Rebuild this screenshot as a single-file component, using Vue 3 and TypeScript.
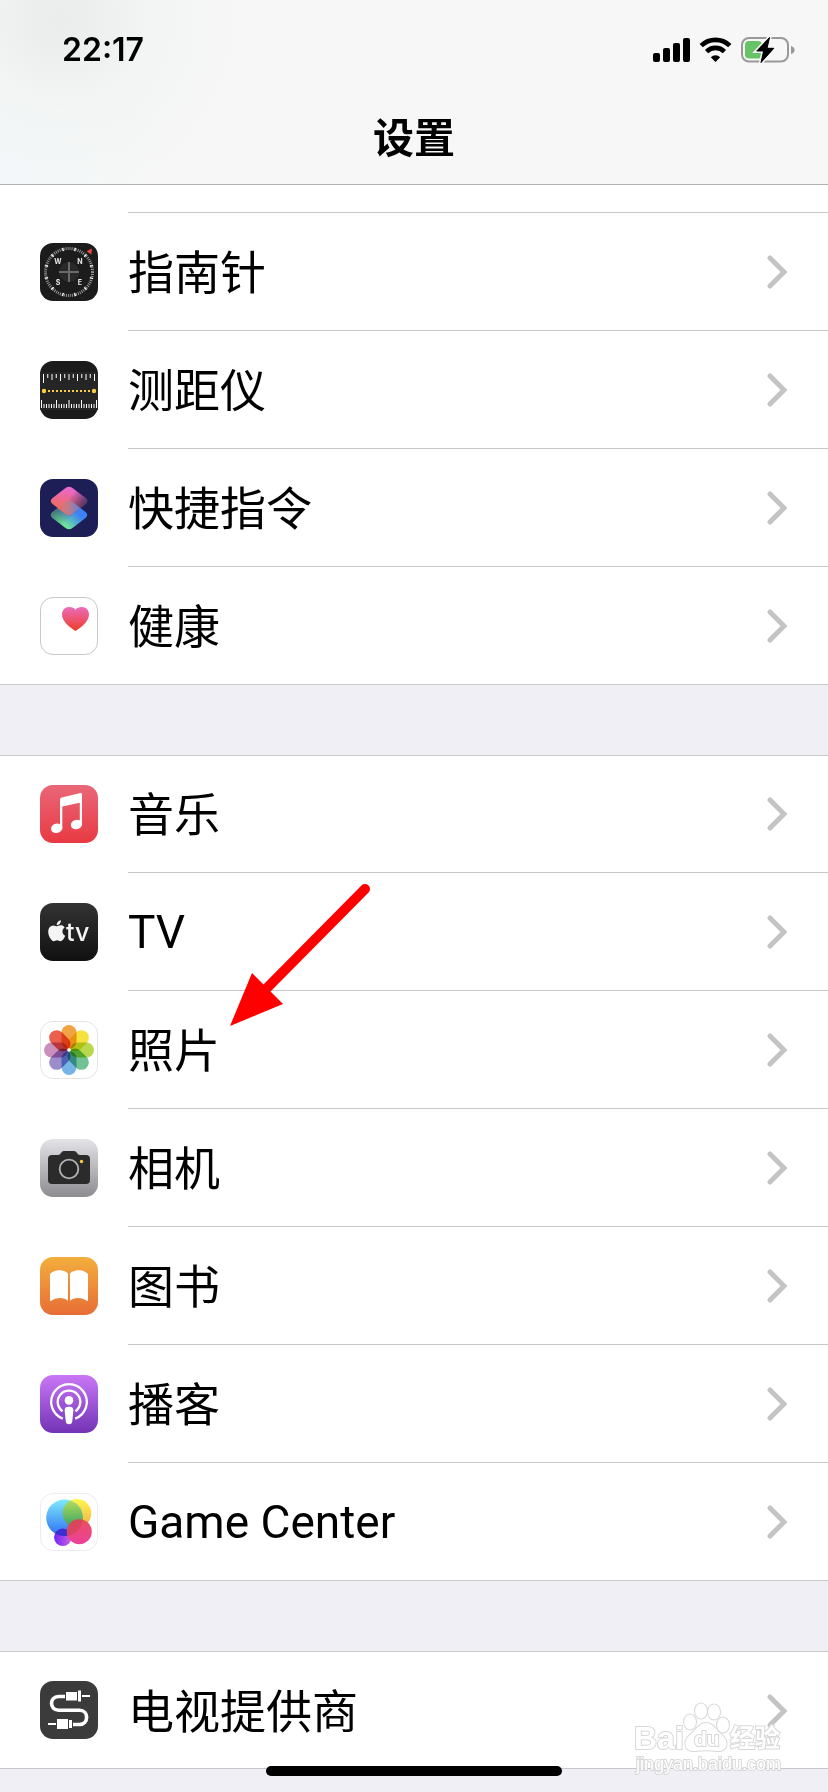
<script setup lang="ts">
type IconName =
  | 'compass' | 'measure' | 'shortcuts' | 'health' | 'music' | 'tv' | 'photos'
  | 'camera' | 'books' | 'podcasts' | 'gamecenter' | 'provider'

interface Entry {
  icon: IconName
  label: string
  pointed?: boolean
  latin?: boolean
}

const groups: { id: string; partial: boolean; entries: Entry[] }[] = [
  {
    id: 'tools',
    partial: true,
    entries: [
      { icon: 'compass', label: '指南针' },
      { icon: 'measure', label: '测距仪' },
      { icon: 'shortcuts', label: '快捷指令' },
      { icon: 'health', label: '健康' },
    ],
  },
  {
    id: 'media',
    partial: false,
    entries: [
      { icon: 'music', label: '音乐' },
      { icon: 'tv', label: 'TV', latin: true },
      { icon: 'photos', label: '照片', pointed: true },
      { icon: 'camera', label: '相机' },
      { icon: 'books', label: '图书' },
      { icon: 'podcasts', label: '播客' },
      { icon: 'gamecenter', label: 'Game Center', latin: true },
    ],
  },
  {
    id: 'provider',
    partial: false,
    entries: [{ icon: 'provider', label: '电视提供商' }],
  },
]

const petals = ['#f2a344', '#f6e23c', '#b9d84e', '#72c294', '#77b5e6', '#9c8ccb', '#cb8fbd', '#e9604f']
const majorTicks = Array.from({ length: 12 }, (_, i) => 15 + i * 30)
const upperTicks = Array.from({ length: 13 }, (_, i) => ({
  x: 3 + i * 4.25,
  h: i === 0 ? 9 : i % 4 === 0 ? 7 : i % 2 === 0 ? 6 : 4,
}))
const lowerTicks = Array.from({ length: 23 }, (_, i) => ({
  x: 1 + i * 2.5,
  h: [0, 6, 11, 16, 22].includes(i) ? 8 : 4,
}))
</script>

<template>
  <div class="screen">
    <header class="top">
      <div class="status">
        <time class="clock">22:17</time>
        <svg class="signals" viewBox="0 0 144 28" aria-hidden="true">
          <rect x="1" y="17" width="7" height="9" rx="2" />
          <rect x="11" y="12" width="7" height="14" rx="2" />
          <rect x="21" y="7" width="7" height="19" rx="2" />
          <rect x="31" y="2" width="7" height="24" rx="2" />
          <g fill="none" stroke="#000" stroke-width="4.6">
            <path d="M49.2 9.7 A20.5 20.5 0 0 1 77.8 9.7" />
            <path d="M54.6 15.6 A12.6 12.6 0 0 1 72.4 15.6" />
          </g>
          <path d="M63.5 26 L58.8 21.2 A6.8 6.8 0 0 1 68.2 21.2 Z" />
          <rect x="90" y="2" width="46" height="23.6" rx="7" fill="none" stroke="#999" stroke-width="2" />
          <path d="M139 10 Q142.6 11 142.6 14 T139 18 Z" fill="#999" />
          <rect x="93" y="5" width="17" height="17.6" rx="4" fill="#67c466" />
          <path d="M117.5 1.5 L104.8 15 H111.6 L109 26.5 L121.8 12.3 H115 Z" fill="#000" stroke="#f7f7f7" stroke-width="4" paint-order="stroke" />
          <path d="M117.5 1.5 L104.8 15 H111.6 L109 26.5 L121.8 12.3 H115 Z" stroke="#000" stroke-width="1" stroke-linejoin="round" />
        </svg>
      </div>
      <h1 class="title">设置</h1>
    </header>

    <main class="content">
      <section v-for="group in groups" :key="group.id" class="group" :class="{ partial: group.partial }">
        <div v-if="group.partial" class="remainder"></div>
        <ul class="rows">
          <li v-for="entry in group.entries" :key="entry.label" class="item">
            <button type="button" class="row">
              <svg class="icon" viewBox="0 0 58 58" aria-hidden="true">
                <template v-if="entry.icon === 'compass'">
                  <rect width="58" height="58" rx="13" fill="#1c1c1c" />
                  <circle cx="29" cy="29" r="23.5" fill="none" stroke="#a2a2a2" stroke-width="3" stroke-dasharray="0.9 1.15" />
                  <path v-for="a in majorTicks" :key="a" d="M29 4 V7.4" stroke="#fff" stroke-width="1.2" :transform="`rotate(${a} 29 29)`" />
                  <circle cx="29" cy="29" r="10" fill="#292929" />
                  <path d="M29 19 V39 M19 29 H39" stroke="#6a6a6a" stroke-width="2" />
                  <g class="points" fill="#e8e8e8">
                    <text x="18" y="21">W</text>
                    <text x="40" y="21">N</text>
                    <text x="18" y="42">S</text>
                    <text x="40" y="42">E</text>
                  </g>
                  <path d="M46.5 8.3 L52 5.6 L51.3 11.5 Z" fill="#f0483c" />
                </template>

                <template v-else-if="entry.icon === 'measure'">
                  <rect width="58" height="58" rx="13" fill="#1b1b1b" />
                  <rect y="11" width="58" height="38" fill="#252525" />
                  <rect v-for="t in upperTicks" :key="'u' + t.x" :x="t.x" y="13" width="1" :height="t.h" fill="#fff" />
                  <rect v-for="t in lowerTicks" :key="'l' + t.x" :x="t.x" :y="47 - t.h" width="1" :height="t.h" fill="#fff" />
                  <path d="M8 30 H50" stroke="#f7ce46" stroke-width="2" stroke-dasharray="2 2" />
                  <circle cx="4" cy="30" r="2.2" fill="#f7ce46" />
                  <circle cx="54" cy="30" r="2.2" fill="#f7ce46" />
                </template>

                <template v-else-if="entry.icon === 'shortcuts'">
                  <defs>
                    <linearGradient id="sc-blue" x1="0.35" y1="0.8" x2="0.8" y2="0.45">
                      <stop offset="0" stop-color="#6fe39a" />
                      <stop offset="0.9" stop-color="#3c82f6" />
                    </linearGradient>
                    <linearGradient id="sc-dark" x1="0" y1="0.3" x2="0.5" y2="0.7">
                      <stop offset="0" stop-color="#2b2f60" stop-opacity="0.7" />
                      <stop offset="1" stop-color="#2b2f60" stop-opacity="0" />
                    </linearGradient>
                    <linearGradient id="sc-pink" x1="0.5" y1="0" x2="0.3" y2="0.75">
                      <stop offset="0" stop-color="#e868d6" />
                      <stop offset="1" stop-color="#ef6b5e" />
                    </linearGradient>
                    <linearGradient id="sc-fade" x1="0.55" y1="0.3" x2="1" y2="0.55">
                      <stop offset="0" stop-color="#3a2a62" stop-opacity="0" />
                      <stop offset="1" stop-color="#3a2a62" stop-opacity="0.9" />
                    </linearGradient>
                    <linearGradient id="sc-mix" x1="0" y1="0.5" x2="1" y2="0.5">
                      <stop offset="0" stop-color="#ec6c62" />
                      <stop offset="0.5" stop-color="#bd7c8c" />
                      <stop offset="1" stop-color="#5b82dc" />
                    </linearGradient>
                  </defs>
                  <rect width="58" height="58" rx="13" fill="#1c1e55" />
                  <g transform="translate(0 14)">
                    <path d="M25.5 9 Q29 6.500 32.500 9 L45.500 19 Q49 22 45.500 25 L32.500 35 Q29 37.500 25.500 35 L12.500 25 Q9 22 12.500 19 Z" fill="url(#sc-blue)" />
                    <path d="M25.5 9 Q29 6.500 32.500 9 L45.500 19 Q49 22 45.500 25 L32.500 35 Q29 37.500 25.500 35 L12.500 25 Q9 22 12.500 19 Z" fill="url(#sc-dark)" />
                  </g>
                  <path d="M25.5 9 Q29 6.500 32.500 9 L45.500 19 Q49 22 45.500 25 L32.500 35 Q29 37.500 25.500 35 L12.500 25 Q9 22 12.500 19 Z" fill="url(#sc-pink)" />
                  <path d="M25.5 9 Q29 6.500 32.500 9 L45.500 19 Q49 22 45.500 25 L32.500 35 Q29 37.500 25.500 35 L12.500 25 Q9 22 12.500 19 Z" fill="url(#sc-fade)" />
                  <path d="M25.5 23 Q29 20.500 32.500 23 L40.300 29 L32.500 35 Q29 37.500 25.500 35 L17.700 29 Z" fill="url(#sc-mix)" />
                </template>

                <template v-else-if="entry.icon === 'health'">
                  <defs>
                    <linearGradient id="heart" x1="0" y1="0" x2="0" y2="1">
                      <stop offset="0" stop-color="#e96bbd" />
                      <stop offset="1" stop-color="#f13c26" />
                    </linearGradient>
                  </defs>
                  <rect x="0.5" y="0.5" width="57" height="57" rx="12.5" fill="#fff" stroke="#c8c8c8" />
                  <path d="M35.5 34 C31 31 22 25 22 17.5 C22 13 25 10 29 10 C32 10 34.5 11 35.5 12.8 C36.5 11 39 10 42 10 C46 10 49 13 49 17.5 C49 25 40 31 35.5 34 Z" fill="url(#heart)" />
                </template>

                <template v-else-if="entry.icon === 'music'">
                  <defs>
                    <linearGradient id="music" x1="0" y1="0" x2="0" y2="1">
                      <stop offset="0" stop-color="#ea6778" />
                      <stop offset="1" stop-color="#e83a43" />
                    </linearGradient>
                  </defs>
                  <rect width="58" height="58" rx="13" fill="url(#music)" />
                  <g fill="#fff">
                    <path d="M20 14.5 Q20 12.8 21.7 12.4 L40.5 8.1 Q42 7.8 42 9.3 V39.5 H39.8 V17.8 L22.3 21.6 V43.5 H20 Z" />
                    <ellipse cx="16.7" cy="43.3" rx="5.7" ry="4.7" transform="rotate(-14 16.7 43.3)" />
                    <ellipse cx="36.5" cy="39.5" rx="5.7" ry="4.7" transform="rotate(-14 36.5 39.5)" />
                  </g>
                </template>

                <template v-else-if="entry.icon === 'tv'">
                  <defs>
                    <linearGradient id="tv" x1="0" y1="0" x2="0" y2="1">
                      <stop offset="0" stop-color="#333" />
                      <stop offset="1" stop-color="#111" />
                    </linearGradient>
                  </defs>
                  <rect width="58" height="58" rx="13" fill="url(#tv)" />
                  <path
                    transform="translate(6.3 17.3) scale(0.87)"
                    fill="#f4f4f4"
                    d="M12.152 6.896c-.948 0-2.415-1.078-3.960-1.040-2.040.027-3.910 1.183-4.961 3.014-2.117 3.675-.546 9.103 1.519 12.090 1.013 1.454 2.208 3.090 3.792 3.039 1.520-.065 2.090-.987 3.935-.987 1.831 0 2.350.987 3.960.948 1.637-.026 2.676-1.480 3.676-2.948 1.156-1.688 1.636-3.325 1.662-3.415-.039-.013-3.182-1.221-3.220-4.857-.026-3.040 2.480-4.494 2.597-4.559-1.429-2.090-3.623-2.324-4.390-2.376-2-.156-3.675 1.090-4.610 1.090zM15.530 3.830c.843-1.012 1.400-2.427 1.245-3.830-1.207.052-2.662.805-3.532 1.818-.780.896-1.454 2.338-1.273 3.714 1.338.104 2.715-.688 3.559-1.701"
                  />
                  <text class="tvmark" x="26" y="38" fill="#f4f4f4">tv</text>
                </template>

                <template v-else-if="entry.icon === 'photos'">
                  <rect x="0.5" y="0.5" width="57" height="57" rx="12.5" fill="#fff" stroke="#e4e4e4" />
                  <g transform="translate(29 29)">
                    <rect v-for="(c, i) in petals" :key="c" class="petal" x="-7.5" y="-25" width="15" height="24" rx="7.5" :fill="c" :transform="`rotate(${i * 45})`" />
                    <circle r="1.8" fill="#fff" />
                  </g>
                </template>

                <template v-else-if="entry.icon === 'camera'">
                  <defs>
                    <linearGradient id="camera" x1="0" y1="0" x2="0" y2="1">
                      <stop offset="0" stop-color="#e3e3e8" />
                      <stop offset="1" stop-color="#8d8c91" />
                    </linearGradient>
                  </defs>
                  <rect width="58" height="58" rx="13" fill="url(#camera)" />
                  <path d="M12 16 H18 Q20 16 21 14 Q22 12 24 12 H34 Q36 12 37 14 Q38 16 40 16 H46 Q50 16 50 20 V41 Q50 45 46 45 H12 Q8 45 8 41 V20 Q8 16 12 16 Z" fill="#2b2b2b" />
                  <circle cx="29" cy="30" r="9.3" fill="#262626" stroke="#b3b3b8" stroke-width="1.8" />
                  <circle cx="41.5" cy="22.5" r="1.7" fill="#f7cb45" />
                </template>

                <template v-else-if="entry.icon === 'books'">
                  <defs>
                    <linearGradient id="books" x1="0" y1="0" x2="0" y2="1">
                      <stop offset="0" stop-color="#f3ae3d" />
                      <stop offset="1" stop-color="#e76d36" />
                    </linearGradient>
                  </defs>
                  <rect width="58" height="58" rx="13" fill="url(#books)" />
                  <path d="M10 17 C14 12 24 12 28 16.5 V43.8 C24 40 16 40 11.5 43.8 Q10 44.5 10 43 Z" fill="#fff" />
                  <path d="M48 17 C44 12 34 12 30 16.5 V43.8 C34 40 42 40 46.5 43.8 Q48 44.5 48 43 Z" fill="#fff" />
                </template>

                <template v-else-if="entry.icon === 'podcasts'">
                  <defs>
                    <linearGradient id="podcasts" x1="0" y1="0" x2="0" y2="1">
                      <stop offset="0" stop-color="#c877f6" />
                      <stop offset="1" stop-color="#7333b6" />
                    </linearGradient>
                  </defs>
                  <rect width="58" height="58" rx="13" fill="url(#podcasts)" />
                  <g fill="none" stroke="#fff" stroke-width="2.3">
                    <path d="M22.8 43.6 A17.8 17.8 0 1 1 35.2 43.6" />
                    <path d="M22.6 36.2 A11.3 11.3 0 1 1 35.4 36.2" />
                  </g>
                  <circle cx="29" cy="25.4" r="4.3" fill="#fff" />
                  <path d="M29 31.8 C32.5 31.8 33.5 33 33.3 36 L32.3 46 C32 48.3 31 49.2 29 49.2 S26 48.3 25.7 46 L24.7 36 C24.5 33 25.5 31.8 29 31.8 Z" fill="#fff" />
                </template>

                <template v-else-if="entry.icon === 'gamecenter'">
                  <defs>
                    <linearGradient id="gc-blue" x1="0" y1="0" x2="0" y2="1">
                      <stop offset="0" stop-color="#7fe9fb" />
                      <stop offset="1" stop-color="#2d6ff3" />
                    </linearGradient>
                    <linearGradient id="gc-yellow" x1="0" y1="0" x2="0" y2="1">
                      <stop offset="0" stop-color="#fdf84f" />
                      <stop offset="1" stop-color="#f3ab45" />
                    </linearGradient>
                    <linearGradient id="gc-green" x1="0" y1="0" x2="0" y2="1">
                      <stop offset="0" stop-color="#b9e05c" />
                      <stop offset="1" stop-color="#35a163" />
                    </linearGradient>
                    <linearGradient id="gc-pink" x1="0" y1="0" x2="0" y2="1">
                      <stop offset="0" stop-color="#e8505e" />
                      <stop offset="1" stop-color="#ee3f9c" />
                    </linearGradient>
                    <linearGradient id="gc-purple" x1="0" y1="0" x2="1" y2="0">
                      <stop offset="0" stop-color="#7024f4" />
                      <stop offset="1" stop-color="#cf62e4" />
                    </linearGradient>
                    <clipPath id="gc-clip"><circle cx="24.5" cy="24.8" r="18.3" /></clipPath>
                  </defs>
                  <rect x="0.5" y="0.5" width="57" height="57" rx="12.5" fill="#fff" stroke="#ececec" />
                  <circle cx="37" cy="20.3" r="14.3" fill="url(#gc-yellow)" />
                  <circle cx="24.5" cy="24.8" r="18.3" fill="url(#gc-blue)" />
                  <circle cx="37" cy="20.3" r="14.3" fill="url(#gc-green)" clip-path="url(#gc-clip)" />
                  <circle cx="22.8" cy="44.3" r="8.7" fill="url(#gc-purple)" />
                  <circle cx="22.8" cy="44.3" r="8.7" fill="#3a2fd0" clip-path="url(#gc-clip)" />
                  <circle cx="39.3" cy="38.7" r="12.5" fill="url(#gc-pink)" />
                  <circle cx="39.3" cy="38.7" r="12.5" fill="#c8404c" opacity="0.5" clip-path="url(#gc-clip)" />
                </template>

                <template v-else>
                  <rect width="58" height="58" rx="13" fill="#3b3b3b" />
                  <path d="M25 15.5 H18.5 C9.2 15.5 9.2 29.2 18.5 29.2 H39.5 C49 29.2 49 43.5 39.5 43.5 H33" fill="none" stroke="#fff" stroke-width="3.6" />
                  <path d="M42 15 H50 M8 43 H16" stroke="#fff" stroke-width="2" />
                  <g fill="#fff">
                    <rect x="26" y="11" width="11" height="8.5" />
                    <rect x="38" y="9.5" width="3" height="11" />
                    <rect x="17" y="38" width="11" height="10" />
                    <rect x="29" y="39" width="3" height="8" />
                  </g>
                </template>
              </svg>
              <span class="body">
                <span class="label" :class="{ latin: entry.latin }">{{ entry.label }}</span>
                <svg class="chevron" viewBox="0 0 20 34" aria-hidden="true">
                  <path d="M3 3 L17 17 L3 31" />
                </svg>
              </span>
            </button>
            <svg v-if="entry.pointed" class="arrow" viewBox="0 0 150 150" aria-hidden="true">
              <path d="M140 9 L42 108" stroke="#f00" stroke-width="10" stroke-linecap="round" />
              <path d="M5 146 L27 93 L58 124 Z" fill="#f00" />
            </svg>
          </li>
        </ul>
      </section>
    </main>

    <svg class="watermark" viewBox="0 0 152 76" aria-hidden="true">
      <g class="ghost">
        <text class="brand" x="2" y="49">Bai</text>
        <path d="M74 23 C81 23 84 30 90 35 C98 42 95 52 85 51 C78 50 70 50 63 51 C53 52 50 42 58 35 C64 30 67 23 74 23 Z" />
        <ellipse cx="58" cy="22" rx="6" ry="7.5" />
        <ellipse cx="69" cy="11" rx="6" ry="7.5" />
        <ellipse cx="82" cy="12" rx="6" ry="7.5" />
        <ellipse cx="91" cy="25" rx="6" ry="7.5" />
        <text class="inner" x="62" y="46">du</text>
        <text class="cjk" x="98" y="47">经验</text>
        <text class="site" x="4" y="70">jingyan.baidu.com</text>
      </g>
    </svg>
    <div class="home"></div>
  </div>
</template>

<style>
body {
  margin: 0;
  background: #f0eff5;
}
</style>

<style scoped>
.screen {
  position: relative;
  box-sizing: border-box;
  min-height: 100vh;
  overflow: hidden;
  background: #f0eff5;
  color: #000;
  font-family: Inter, "Noto Sans CJK SC", sans-serif;
}

.top {
  box-sizing: border-box;
  height: 185px;
  border-bottom: 1px solid #b2b2b3;
  background:
    radial-gradient(circle at 60px 20px, #e9eceb 0, rgba(240, 243, 242, 0.6) 90px, rgba(247, 247, 247, 0) 190px),
    radial-gradient(circle at 10px 170px, #f5f8fb 0, rgba(245, 249, 248, 0.8) 90px, rgba(247, 247, 247, 0) 150px),
    #f7f7f7;
}

.status {
  display: flex;
  align-items: center;
  justify-content: space-between;
  height: 100px;
  padding: 0 32px 0 62px;
}

.clock {
  font-size: 32px;
  font-weight: 600;
  line-height: 40px;
}

.signals {
  width: 144px;
  height: 28px;
}

.title {
  margin: 0;
  font-size: 41px;
  font-weight: 700;
  line-height: 76px;
  text-align: center;
}

.group {
  border-top: 1px solid #c8c7cb;
  border-bottom: 1px solid #c8c7cb;
  background: #fff;
}

.group + .group {
  margin-top: 70px;
}

.group.partial {
  border-top: 0;
}

.remainder {
  height: 27px;
  margin-left: 128px;
  border-bottom: 1px solid #c8c7cb;
}

.rows {
  margin: 0;
  padding: 0;
  list-style: none;
}

.item {
  position: relative;
}

.row {
  display: flex;
  align-items: center;
  box-sizing: border-box;
  width: 100%;
  height: 118px;
  padding: 0 0 0 40px;
  border: 0;
  background: transparent;
  color: inherit;
  font: inherit;
  text-align: left;
  cursor: pointer;
}

.group:not(.partial) .item:first-child .row {
  height: 117px;
  padding-bottom: 1px;
}

.group:not(.partial) .item:first-child .body {
  margin-bottom: -1px;
}

.item:last-child .row {
  height: 117px;
  padding-top: 1px;
}

.group:not(.partial) .item:only-child .row {
  height: 116px;
  padding-top: 0;
  padding-bottom: 0;
}

.icon {
  flex: none;
  width: 58px;
  height: 58px;
}

.body {
  display: flex;
  flex: 1;
  align-items: center;
  align-self: stretch;
  justify-content: space-between;
  box-sizing: border-box;
  margin-left: 30px;
  padding-right: 41px;
  border-bottom: 1px solid #c8c7cb;
}

.item:last-child .body {
  border-bottom: 0;
}

.label {
  font-size: 46px;
  line-height: 60px;
}

.label.latin {
  font-family: Roboto, "Liberation Sans", sans-serif;
}

.chevron {
  width: 20px;
  height: 34px;
  fill: none;
  stroke: #c4c4c6;
  stroke-width: 5;
  stroke-linecap: round;
  stroke-linejoin: miter;
}

.points {
  font-size: 7px;
  font-weight: 700;
  text-anchor: middle;
}

.tvmark {
  font-size: 25px;
  font-weight: 500;
}

.petal {
  mix-blend-mode: multiply;
}

.arrow {
  position: absolute;
  top: -111px;
  left: 225px;
  z-index: 1;
  width: 150px;
  height: 150px;
  pointer-events: none;
}

.watermark {
  position: absolute;
  right: 44px;
  bottom: 16px;
  width: 152px;
  height: 76px;
  overflow: visible;
  pointer-events: none;
}

.ghost {
  fill: #fff;
  stroke: #d8d8da;
  stroke-width: 2;
  paint-order: stroke;
  font-family: "Liberation Sans", "Noto Sans CJK SC", sans-serif;
}

.brand {
  font-size: 32px;
  font-weight: 700;
}

.inner {
  font-size: 21px;
  font-weight: 700;
}

.cjk {
  font-family: "Noto Sans CJK SC", sans-serif;
  font-size: 25px;
  font-weight: 700;
}

.site {
  font-size: 18px;
}

.home {
  position: absolute;
  bottom: 16px;
  left: 50%;
  width: 296px;
  height: 10px;
  border-radius: 5px;
  background: #000;
  transform: translateX(-50%);
}
</style>
